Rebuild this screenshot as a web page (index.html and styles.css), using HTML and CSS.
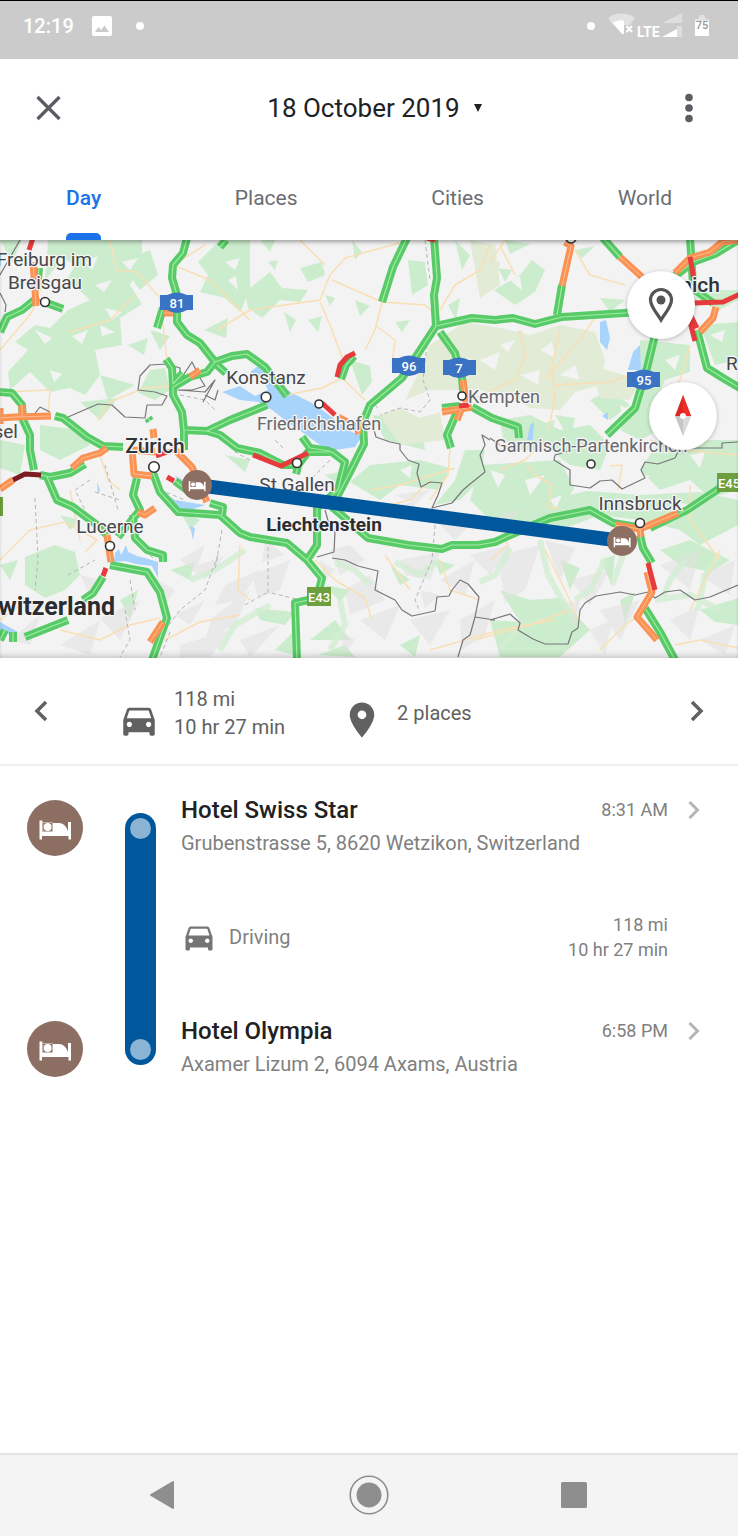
FILE: index.html
```html
<!DOCTYPE html>
<html lang="en">
<head>
<meta charset="utf-8">
<meta name="viewport" content="width=device-width, initial-scale=1">
<title>Timeline</title>
<link rel="stylesheet" href="styles.css">
</head>
<body>
<svg class="sprite" aria-hidden="true">
  <symbol id="car" viewBox="0 0 24 24"><path d="M18.92 6.01C18.72 5.42 18.16 5 17.5 5h-11c-.66 0-1.21.42-1.42 1.01L3 12v8c0 .55.45 1 1 1h1c.55 0 1-.45 1-1v-1h12v1c0 .55.45 1 1 1h1c.55 0 1-.45 1-1v-8l-2.08-5.99zM6.5 16c-.83 0-1.5-.67-1.5-1.5S5.67 13 6.5 13s1.5.67 1.5 1.5S7.33 16 6.5 16zm11 0c-.83 0-1.5-.67-1.5-1.5s.67-1.5 1.5-1.5 1.5.67 1.5 1.5-.67 1.5-1.5 1.5zM5 11l1.5-4.5h11L19 11H5z"/></symbol>
  <symbol id="bed" viewBox="0 0 56 56"><circle cx="28" cy="28" r="28" fill="#8d6e63"/><path fill="#fff" d="M12.500 20.500H15.500V31.500H25.500V23H32C36 23 39.500 26 41 31.500V22H44V39.500H41.500V36H15V39.500H12.500z"/><path d="M16 31.500V22.500H25.500" fill="none" stroke="#c4b1aa" stroke-width="1"/><circle cx="20.700" cy="27" r="3.900" fill="#fff"/></symbol>
</svg>

<div class="screen">
  <header class="status">
    <div class="status-side">
      <span>12:19</span>
      <svg class="status-photo" viewBox="0 0 20 20"><path fill="#fff" fill-rule="evenodd" d="M2 0h16a2 2 0 0 1 2 2v16a2 2 0 0 1-2 2H2a2 2 0 0 1-2-2V2a2 2 0 0 1 2-2zm1 16h14l-4.500-6.500-3.500 4.500-2.500-3z"/></svg>
      <i class="status-dot"></i>
    </div>
    <div class="status-side status-right">
      <i class="status-dot"></i>
      <svg class="status-net" viewBox="0 0 74 26">
        <path fill="#e2e2e2" d="M0 5C7-1 20-1 27 5l-5 7H5z"/><path fill="#fff" d="M4.500 10c5-3 9-3.500 11.500-2v13h-2z"/>
        <path d="m18.500 13 5.500 6m0-6-5.500 6" stroke="#fff" stroke-width="2"/>
        <text x="29" y="24" class="lte">LTE</text>
        <path fill="#dedede" d="M54 10 74 0v10zM69 13h5v11h-5z"/><path fill="#fff" d="M54 24l15-8v8z"/>
      </svg>
      <svg class="status-batt" viewBox="0 0 14 22"><path fill="#e2e2e2" d="M0 4h3l2-4h4l2 4h3v4H0z"/><path fill="#fff" d="M0 6h14v14a1 1 0 0 1-1 1H1a1 1 0 0 1-1-1z"/><text x="7" y="14" class="batt">75</text></svg>
    </div>
  </header>

  <div class="appbar">
    <button class="icon-btn" aria-label="Close"><svg width="48" height="48" viewBox="0 0 48 48"><path d="m12.500 13 22 22m0-22-22 22" stroke="#5a5d61" stroke-width="3.300"/></svg></button>
    <button class="date">18 October 2019 <svg width="8" height="8" viewBox="0 0 8 8"><path d="M0 0h8L4 8z" fill="#202124"/></svg></button>
    <button class="icon-btn" aria-label="More options"><svg width="48" height="48" viewBox="0 0 48 48" fill="#5a5d61"><circle cx="24" cy="13.500" r="3.800"/><circle cx="24" cy="24" r="3.800"/><circle cx="24" cy="34.500" r="3.800"/></svg></button>
  </div>

  <nav class="tabs">
    <a href="#day" class="tab tab-active" aria-current="page">Day</a>
    <a href="#places" class="tab">Places</a>
    <a href="#cities" class="tab">Cities</a>
    <a href="#world" class="tab">World</a>
  </nav>

  <div class="map">
    <svg class="map-art" viewBox="0 240 738 418" role="img" aria-label="Route map from Wetzikon to Innsbruck">
      <defs>
        <g id="roads-green">
          <path d="M187 238 183 253 173 265 172 278 177 295 177 322 187 335 200 343 215 362 207 372 190 377 173 387 173 395 182 412 184 430 207 431 230 420 250 412 267 405"/>
          <path d="M215 362 232 356 247 354 265 367 287 396M217 365 226 373M166 359 172 368 173 384 183 373M163 308 157 328M47 303 63 309M0 332 7 317 22 310 38 297M39 268 37 290M226 240 220 247"/>
          <path d="M0 392 12 393 22 405 23 420 30 435 30 450 34 470M55 416 63 418 87 437 103 446 123 447M184 430V450M207 431 220 435 237 448 260 453 283 465 298 465 308 452 332 452 345 462 338 490 317 508 317 545 307 560"/>
          <path d="M434 238 437 278 434 295 436 326 402 378 370 405 363 422 364 444 350 472 338 495 333 508 345 518 368 538 408 545 442 549 452 545 478 545 495 542 517 532 550 518 590 510 613 523 637 527M650 528 687 510 720 488 738 480"/>
          <path d="M407 238 393 267 382 302M436 326 472 318 495 320 513 318 535 324 562 317 640 312M440 332 455 353 462 378 464 400M557 315 562 285M603 238 620 257M690 238 693 285M675 276 693 262 715 254 738 240"/>
          <path d="M697 330 707 368 723 378 740 388M655 335 647 368 635 408 607 435M472 407 492 418 518 427 519 438M457 412 447 435 451 448M354 356 346 365 341 379M442 408 460 406M302 437 310 448 330 451M695 290 713 303"/>
          <path d="M40 475 50 477 70 473 85 464M47 477 57 500 73 507 97 525 107 535M110 565 147 572 160 592 167 618 152 660M103 577 93 593 83 600M25 637 68 620M0 640 5 630M13 632V642"/>
          <path d="M137 478 133 495 140 510 118 537M133 515 135 538 147 550 163 555 163 562M153 473 160 492 178 512 220 515 240 533 250 537 287 543 307 560 322 578 317 598 295 603 297 660M210 503 223 507 222 515M175 481 187 490M640 535 643 548 652 563M645 608 660 632 675 660M148 418 150 421M298 466 296 474"/>
        </g>
        <g id="roads-orange">
          <path d="M0 418 15 417 51 416M22 405V416M33 262 35 290 36 306M0 408V424M190 377 200 370M164 313 173 313M153 429 154 438M72 468 83 458 100 453 107 448M132 448 134 474 152 476M132 450 155 452M0 489 13 480M172 447 192 467 207 502M107 535 111 562M138 512 145 515 155 508M163 622 150 642"/>
          <path d="M565 242 571 246 562 286M620 257 642 277M675 273 690 258 710 252 722 242 738 240M716 307 713 318 700 332M463 380 466 402M442 412 472 407M461 410 457 420M338 417 357 427 359 434M615 525 640 529 678 513M640 529 641 537M647 572 652 592 637 617 657 640"/>
        </g>
        <g id="roads-red">
          <path d="M33 238 29 250M337 377 340 365 347 357 355 353M322 403 335 415M253 455 281 466 308 453M690 257 694 280M693 303 723 302 740 294M689 318 695 341M688 310 697 328M648 563 655 590M106 568 103 576M167 477 174 481M459 406 469 405M156 456 173 450M427 238 435 240"/>
        </g>
      </defs>

      <rect y="240" width="738" height="418" fill="#f3f3f3"/>
      <g class="forest">
        <path d="M48 240H142V262L130 285 142 304 120 318 122 345 95 350 100 375 85 395 70 388 50 392 30 372 10 390 8 372 28 350 15 342 35 325 50 328 68 310 90 300 70 282 60 262 45 280Z"/>
        <path d="M120 262 150 250 158 275 140 290ZM0 240H22L12 262ZM198 262 220 240H250V290L240 312 225 298 200 292 208 275ZM204 330 228 318 226 338ZM128 345 148 338 144 355ZM138 393 150 370 165 368 170 390 155 400ZM100 375 135 385 108 400ZM80 402 118 398 100 420ZM150 330 170 336 160 350ZM40 425 80 430 90 445 60 460 40 450ZM0 440 25 445 20 475 0 468Z"/>
        <path d="M245 292 270 272 282 288 308 290 300 302 280 300 262 318 248 308ZM260 240H275L270 252ZM300 268 322 262 325 275 308 282ZM284 312 296 320 290 332ZM308 320 322 316 318 332ZM352 240 362 252 355 260ZM350 360 370 366 372 382 362 395ZM355 300 370 306 360 316ZM408 260 425 262 428 285 412 295ZM455 240 470 255 462 270ZM480 262 492 275 482 285ZM448 305 460 298 456 320ZM268 262 278 260 275 270ZM395 322 410 320 402 332ZM325 295 335 298 330 306Z"/>
        <path d="M494 290 520 275 532 260 545 270 535 292 515 305ZM498 268 512 270 505 282ZM505 240 530 244 510 254ZM575 250 595 246 582 258ZM600 298 625 300 610 312ZM640 340 690 345 690 372 665 380 655 405 660 430 640 440 620 430 640 400ZM700 325 738 322V360L715 365ZM560 335 580 330 575 350ZM590 350 605 360 595 372ZM590 400 610 390 630 405 610 420ZM500 420 530 415 560 430 590 425 610 445 600 470 570 465 550 450 505 450ZM660 440H738V490L710 498 690 480 660 490 640 470ZM555 415 575 418 570 440ZM700 290H738V300L715 312ZM540 425 555 420 550 440Z"/>
        <path d="M480 465 560 460 575 490 640 495 700 492 738 500V525L700 545 680 530 640 520 600 515 560 530 500 530 470 500ZM370 465 420 460 450 468 440 490 400 485 380 500 350 482ZM372 415 420 420 425 450 385 440ZM465 450 485 450 480 480 460 500 435 505 455 480ZM500 590 530 600 560 598 590 630 560 657H500L490 620 520 622ZM560 560 580 568 570 590ZM600 560 615 555 612 585ZM318 655 345 645 355 657ZM310 640 335 620 350 640ZM390 565 410 580 400 585ZM325 585 350 590 340 602ZM400 645 420 635 415 657Z"/>
        <path d="M25 557 55 545 75 552 80 575 65 590 45 598 25 585ZM180 510 200 520 190 530ZM120 600 138 590 130 620ZM0 565 18 560 10 580ZM60 515 80 520 70 530ZM170 570 195 562 190 580ZM255 608 295 612 285 625 260 620ZM275 650 295 630V655ZM660 550 690 540 730 560 710 572 680 565ZM620 600 635 592 625 625ZM700 610 738 598V625L715 622ZM435 560 455 565 440 575ZM225 455 250 460 245 472ZM325 475 340 472 345 490Z"/>
      </g>
      <g class="olive">
        <path d="M430 345 465 322 500 328 530 335 560 325 595 332 605 360 600 385 575 392 560 410 530 408 510 395 480 390 430 390 405 400 420 370ZM470 240 495 245 500 285 480 298ZM490 345 520 330 540 345 515 360ZM380 415 400 408 420 418 440 412 445 440 400 445ZM590 365 640 380 630 400 600 398ZM690 295 705 300 695 310ZM488 260 500 262 495 285Z"/>
      </g>
      <g class="clearing">
        <path d="M60 256 75 265 68 278 58 272ZM95 285 112 280 104 292ZM35 330 52 338 45 344ZM105 308 122 312 112 320ZM122 262 138 258 130 270ZM50 370 62 374 54 382ZM100 325 115 332 102 336ZM225 262 240 258 235 270ZM228 280 236 276 238 290ZM85 262 98 256 92 270ZM72 336 88 330 82 344ZM510 280 520 276 522 290ZM500 345 515 340 508 352ZM540 350 552 342 555 358ZM480 360 500 352 495 370ZM520 375 540 370 538 385ZM560 375 575 365 580 380ZM450 362 470 358 478 375ZM620 405 630 410 622 418ZM665 360 680 355 675 370ZM710 335 725 330 722 342ZM525 480 545 475 530 495ZM580 480 598 488 570 495ZM690 455 705 452 700 468ZM490 470 505 475 498 488ZM400 470 412 465 410 478ZM630 480 650 475 640 488ZM670 500 690 505 678 518ZM550 500 562 495 556 508Z"/>
      </g>
      <g class="ridge">
        <path d="M180 560 205 545 198 565 225 556 205 580ZM225 585 260 570 240 600 215 605ZM175 615 205 600 190 625ZM212 618 250 590 235 625 205 640ZM252 575 290 560 280 590 258 598ZM10 640 40 615 30 645ZM60 645 100 620 90 655ZM100 618 140 600 120 640ZM180 645 230 630 210 657H180ZM240 640 280 625 250 657ZM265 540 285 555 262 562ZM330 550 350 545 365 560 340 575ZM345 590 370 575 385 600 350 615ZM400 560 440 552 430 580 405 575ZM360 620 400 605 385 640ZM410 620 450 610 430 645ZM440 580 475 560 465 595ZM470 555 510 545 490 575ZM500 555 540 545 525 590 508 600ZM545 540 575 548 560 580ZM460 620 495 600 485 635 462 650ZM500 570 520 560 505 605ZM570 580 610 570 590 605ZM600 610 640 600 620 640ZM590 630 612 620 605 655ZM670 620 700 605 690 640ZM700 640 735 625 725 655ZM660 565 700 550 690 590ZM700 575 735 560 730 595ZM340 630 355 640 345 655ZM380 510 420 500 400 520ZM440 525 475 520 455 540ZM490 520 520 508 510 525ZM395 495 430 490 415 503ZM150 575 175 590 165 605ZM80 575 100 580 90 595ZM20 600 50 605 30 615ZM560 605 580 600 575 625ZM420 590 440 595 425 608ZM320 560 335 570 325 580Z"/>
      </g>
      <g class="valley">
        <path d="M540 540 548 575 562 600 572 615M605 560 590 590 575 600M625 550 612 585M510 548 495 575 480 582M440 560 420 575 395 562M720 555 705 575 698 610M655 600 690 595 720 610M500 650 520 625 545 620M330 650 345 625 340 600M370 585 355 570 335 562M220 650 235 625 270 605M190 580 215 570 245 550M685 560 670 580 662 600"/>
      </g>
      <g class="water">
        <path d="M222 392 240 386 255 396 268 390 262 378 250 372 258 366 272 378 292 393 310 402 325 412 338 422 352 432 362 436 355 447 335 450 320 445 305 434 290 424 272 410 258 402 240 400ZM600 322 606 320 610 338 607 350 600 342ZM640 345 641 370 628 370 633 352ZM115 553 119 549 121 555 126 545 128 552 137 556 145 558 158 562 158 578 152 566 136 564 125 561 114 562ZM160 490 175 500 205 505 185 512 168 505ZM174 475 192 485 188 490ZM0 622 18 632 12 636 0 630ZM530 425 534 422 533 440 527 440ZM190 526 195 528 193 540ZM97 482 100 490 98 494ZM602 416 608 412V420Z"/>
      </g>
      <g class="minor">
        <path d="M110 240 116 270 137 272 160 298 167 360M0 350 30 315 38 300M0 392 50 390 48 416M98 420 110 402 145 388 170 386M70 332 110 320 135 295M173 265 210 280 250 320M178 262 205 245M217 330 250 310 285 305 320 300 330 275 345 258 385 247 410 240M320 302 330 325 343 360M332 280 382 302 425 305 440 318M382 302 375 330 365 350M300 240 325 265M287 395 322 388 342 378 365 400M375 325 395 340 392 365M440 310 455 285 480 270 490 245M500 245 515 275M490 262 505 240M520 330 525 358 515 380 470 400M560 330 552 365 555 400 548 430M600 310 580 340 545 380M555 385 610 382 640 372M575 250 590 275 625 285M690 345 680 380 660 400M650 440 680 450 738 455"/>
        <path d="M0 560 30 530 65 522 97 540 85 552M70 490 80 540M100 455 108 480 120 490M0 620 20 605M60 630 100 640 130 625 160 618M165 640 200 622 240 615M240 545 238 590 250 600M315 560 335 580 365 598 372 620M385 555 410 590M440 560 450 590 480 600M370 490 400 485 455 468M450 448 448 475 430 500M370 510 410 500 430 480M527 465 535 475 552 485 548 508 560 508M610 466 622 465 618 490M490 560 508 545 500 530M545 550 570 600 580 625M475 640 530 625 570 610M690 485 690 520 720 560M720 550 705 580 690 610M600 650 625 625 640 615M675 645 700 640 738 648M430 650 500 630 555 620M500 470 525 460 540 445"/>
      </g>
      <g class="county">
        <path d="M425 240 430 280M427 345 423 380 430 400 420 412 400 408 380 415M180 395 205 400 215 410M90 480 75 490 90 520M95 492 120 500M35 498 38 560 35 590M68 575 95 560M105 465 118 510M125 610 130 640 120 657M130 580 135 610M160 490 185 500M218 555 205 590 180 610 165 630M222 530 215 570M268 540V592L300 600M245 605 268 592M435 525 432 560 415 600 420 612M283 448 275 440M250 460 235 452M330 460 310 480M370 400 380 410M170 632 160 657M140 545 155 560"/>
      </g>
      <g class="border">
        <path d="M32 417 40 407 50 412M68 417 98 404 112 405 125 417 145 418 147 405 162 405 167 396 155 392 138 390 140 376 150 365 167 364 180 368 180 380 192 362 200 378 205 386 192 390 178 390 205 392 215 380 203 402M0 293 6 305 5 312M20 240 0 275M205 395 215 400 218 390"/>
        <path d="M374 430 376 437 390 442 400 444 400 450 408 460 419 464 417 473 421 487 430 482 442 483 438 495 432 508 452 503 463 490 470 484 485 472 480 455 485 445 482 435 490 440M325 510 329 524 335 532 334 552 317 557M332 558 345 560 358 566 378 571 375 590 395 600 402 610 412 616 435 611 437 597 449 596 452 590 460 580 468 584 479 597 475 617 470 635 463 640 458 657M475 617 495 620M490 620 510 614 520 623 518 630 533 639 545 644 568 644 572 632 578 628 580 610 585 603 596 596 620 592 635 595 648 592 655 598 665 592 680 590 695 600 710 597 738 585M490 438 500 445 520 450M572 450 555 455 554 460 570 470 570 485 590 488 600 481 612 480 622 489 645 478 641 470 645 462 658 464 675 458 680 448 690 448 722 448 722 443 738 442"/>
      </g>
      <g class="roads">
        <use href="#roads-green" class="green"/><use href="#roads-green" class="mid-green"/>
        <use href="#roads-orange" class="orange"/><use href="#roads-orange" class="mid-orange"/>
        <use href="#roads-red" class="red"/>
        <path d="M13 480 25 474 41 475" class="maroon"/>
      </g>

      <g class="towns">
        <circle cx="45" cy="302" r="4.500"/><circle cx="266" cy="397" r="4.800"/><circle cx="319" cy="404" r="4"/><circle cx="462" cy="396" r="4"/><circle cx="154" cy="467" r="5.300"/><circle cx="297" cy="463" r="4.500"/><circle cx="110" cy="546" r="4.500"/><circle cx="591" cy="464" r="4"/><circle cx="640" cy="523" r="4.500"/><circle cx="571" cy="238" r="5"/>
      </g>
      <g class="shield">
        <path d="M160 295H167Q177 290 187 295H193V310H187Q177 316 167 310H160ZM392 358H399Q409 353 419 358H425V373H419Q409 379 399 373H392ZM443 360H449Q459 355 469 360H476V375H469Q459 381 449 375H443ZM627 372H634Q644 367 654 372H660V387H654Q644 393 634 387H627Z"/>
        <path class="shield-e" d="M307 587H331V606H307ZM717 473H738V492H717ZM-5 497H3V516H-5Z"/>
        <text x="177" y="308">81</text><text x="409" y="371">96</text><text x="459" y="373">7</text><text x="644" y="385">95</text><text x="319" y="602">E43</text><text x="729" y="488">E45</text>
      </g>
      <g class="labels">
        <text x="92" y="266" text-anchor="end">Freiburg im</text><text x="45" y="289" text-anchor="middle">Breisgau</text>
        <text x="266" y="384" text-anchor="middle">Konstanz</text><text x="319" y="430" text-anchor="middle" class="soft">Friedrichshafen</text>
        <text x="504" y="403" text-anchor="middle" class="soft">Kempten</text><text x="591" y="452" text-anchor="middle" class="soft">Garmisch-Partenkirchen</text>
        <text x="297" y="491" text-anchor="middle">St Gallen</text><text x="110" y="533" text-anchor="middle">Lucerne</text><text x="640" y="510" text-anchor="middle">Innsbruck</text>
        <text x="18" y="438" text-anchor="end">Basel</text><text x="726" y="370">R</text>
        <text x="155" y="453" text-anchor="middle" class="city">Zürich</text><text x="720" y="292" text-anchor="end" class="city">Munich</text>
        <text x="324" y="531" text-anchor="middle" class="country">Liechtenstein</text><text x="115" y="615" text-anchor="end" class="nation">Switzerland</text>
      </g>

      <path d="M197 485 622 541" class="trip"/>
      <use href="#bed" x="182" y="470" width="30" height="30"/><use href="#bed" x="607" y="526" width="30" height="30"/>
    </svg>
    <button class="map-btn map-place" aria-label="Show place"><svg width="68" height="68" viewBox="0 0 68 68"><path d="M34 18.500c-6 0-10.500 4.800-10.500 10.500 0 7 6.500 13 10.500 20 4-7 10.500-13 10.500-20 0-5.700-4.500-10.500-10.500-10.500z" fill="none" stroke="#555" stroke-width="3.200"/><circle cx="34" cy="29" r="4.500" fill="#555"/></svg></button>
    <button class="map-btn map-compass" aria-label="Compass"><svg width="68" height="68" viewBox="0 0 68 68"><path d="M34 13 26 34h16z" fill="#dd2822"/><path d="M34 13v21h8z" fill="#f02d29"/><path d="M26 34h16l-8 20z" fill="#c6c6c6"/><path d="M34 34h8l-8 20z" fill="#dadada"/><circle cx="34" cy="34" r="3" fill="#fff"/></svg></button>
  </div>

  <section class="summary">
    <button class="icon-btn" aria-label="Previous day"><svg width="48" height="48" viewBox="0 0 48 48"><path d="m28 15-9 9 9 9" fill="none" stroke="#616161" stroke-width="3.500"/></svg></button>
    <div class="facts">
      <div class="fact"><svg class="icon-lg"><use href="#car"/></svg><p>118 mi<br>10 hr 27 min</p></div>
      <div class="fact fact-top"><svg class="icon-lg" viewBox="0 0 24 24"><path d="M12 2C8.130 2 5 5.130 5 9c0 5.250 7 13 7 13s7-7.750 7-13c0-3.870-3.130-7-7-7zm0 9.500a2.500 2.500 0 1 1 0-5 2.500 2.500 0 0 1 0 5z"/></svg><p>2 places</p></div>
    </div>
    <button class="icon-btn" aria-label="Next day"><svg width="48" height="48" viewBox="0 0 48 48"><path d="m20 15 9 9-9 9" fill="none" stroke="#616161" stroke-width="3.500"/></svg></button>
  </section>

  <main class="timeline">
    <svg class="stop-icon"><use href="#bed"/></svg>
    <div class="rail"><i></i><i></i></div>
    <a class="stop" href="#swiss-star">
      <span class="stop-head"><strong>Hotel Swiss Star</strong><span class="time">8:31 AM</span><svg class="chev" viewBox="0 0 12 20"><path d="m1.500 2 8 8-8 8"/></svg></span>
      <span class="address">Grubenstrasse 5, 8620 Wetzikon, Switzerland</span>
    </a>
    <div class="leg"><svg class="icon-md"><use href="#car"/></svg><span class="mode">Driving</span><p class="leg-info">118 mi<br>10 hr 27 min</p></div>
    <svg class="stop-icon stop-icon-end"><use href="#bed"/></svg>
    <a class="stop" href="#olympia">
      <span class="stop-head"><strong>Hotel Olympia</strong><span class="time">6:58 PM</span><svg class="chev" viewBox="0 0 12 20"><path d="m1.500 2 8 8-8 8"/></svg></span>
      <span class="address">Axamer Lizum 2, 6094 Axams, Austria</span>
    </a>
  </main>

  <footer class="sysnav">
    <button aria-label="Back"><svg width="40" height="40" viewBox="0 0 40 40"><path d="M7 20 29 7v26z" fill="#8e8e8e" stroke="#8e8e8e" stroke-width="2" stroke-linejoin="round"/></svg></button>
    <button aria-label="Home"><svg width="40" height="40" viewBox="0 0 40 40"><circle cx="20" cy="20" r="18.800" fill="none" stroke="#8e8e8e" stroke-width="1.600"/><circle cx="20" cy="20" r="12.500" fill="#8e8e8e"/></svg></button>
    <button aria-label="Recent apps"><svg width="40" height="40" viewBox="0 0 40 40"><rect x="7" y="7" width="26" height="26" rx="1.500" fill="#8e8e8e"/></svg></button>
  </footer>
</div>
</body>
</html>
```
FILE: styles.css
```css
* { box-sizing: border-box; }
body { margin: 0; background: #fff; font-family: Roboto, "Liberation Sans", sans-serif; color: #616161; }
p { margin: 0; }
a { color: inherit; text-decoration: none; }
button { border: 0; padding: 0; background: none; font: inherit; color: inherit; }
svg { display: block; }
.sprite { position: absolute; width: 0; height: 0; }
.screen { min-height: 100vh; display: flex; flex-direction: column; }

.status { height: 59px; padding: 0 29px 8px 23px; background: #cbcbcb; border-top: 1px solid #000; color: #fff; font-size: 20px; font-weight: 500; display: flex; justify-content: space-between; align-items: center; }
.status-side { display: flex; align-items: center; gap: 18px; }
.status-photo { width: 20px; height: 20px; }
.status-dot { width: 8px; height: 8px; border-radius: 50%; background: #fff; margin-left: 6px; }
.status-right { gap: 13px; }
.status-net { width: 74px; height: 26px; }
.status-batt { width: 14px; height: 22px; }
.lte { font-size: 14px; font-weight: 700; fill: #fff; }
.batt { font-size: 11px; text-anchor: middle; fill: #999; }

.appbar { height: 98px; padding: 0 25px; display: flex; align-items: center; justify-content: space-between; }
.icon-btn { flex: none; width: 48px; height: 48px; }
.date { display: flex; align-items: center; gap: 14px; padding-left: 11px; font-size: 26px; color: #202124; }

.tabs { height: 83px; padding: 0 66px; display: flex; justify-content: space-between; font-size: 21px; color: #6a6d72; }
.tab { height: 83px; line-height: 82px; }
.tab-active { color: #1a73e8; font-weight: 500; position: relative; }
.tab-active::after { content: ""; position: absolute; left: 0; right: 0; bottom: 0; height: 7px; background: #1a73e8; border-radius: 5px 5px 0 0; }

.map { position: relative; overflow: hidden; }
.map::after { content: ""; position: absolute; inset: 0; pointer-events: none; box-shadow: inset 0 4px 4px -2px rgba(0, 0, 0, .35), inset 0 -6px 6px -4px rgba(0, 0, 0, .2); }
.map-art { width: 100%; height: auto; }
.map-btn { position: absolute; width: 68px; height: 68px; border-radius: 50%; background: #fff; box-shadow: 0 1px 4px rgba(0, 0, 0, .25); }
.map-place { top: 31px; right: 43px; }
.map-compass { top: 142px; right: 21px; }
.forest { fill: #ccedcd; }
.olive { fill: #e2ebd5; }
.clearing { fill: #f3f3f3; }
.ridge { fill: #e0e0e0; opacity: .55; }
.water { fill: #a8d3fb; }
.minor, .county, .border, .roads, .valley { fill: none; stroke-linejoin: round; }
.valley { stroke: #d3eed2; stroke-width: 6px; opacity: .8; }
.minor { stroke: #f9dfb4; stroke-width: 1.5px; }
.county { stroke: #b5b5b8; stroke-width: 1px; stroke-dasharray: 4 3; }
.border { stroke: #77777a; stroke-width: 1.2px; }
.green { stroke: #58cb68; stroke-width: 8px; }
.mid-green { stroke: #9ceda0; stroke-width: 1.2px; }
.orange { stroke: #fa9254; stroke-width: 7px; }
.mid-orange { stroke: #fdbb91; stroke-width: 1px; }
.red { stroke: #e63a3c; stroke-width: 5px; }
.maroon { stroke: #7b1c22; stroke-width: 5px; }
.towns { fill: #fff; stroke: #333; stroke-width: 1.6px; }
.shield { fill: #3a73c4; }
.shield-e { fill: #6d9f3e; }
.shield text { fill: #fff; font-size: 13px; font-weight: 500; text-anchor: middle; }
.labels { font-size: 19px; fill: #45474b; stroke: #f6f6f6; stroke-width: 2.5px; stroke-linejoin: round; paint-order: stroke; }
.labels .soft { font-size: 18px; fill: #66686d; }
.labels .city { font-size: 21px; font-weight: 500; fill: #303236; }
.labels .country { font-size: 19px; font-weight: 700; fill: #2a2c30; }
.labels .nation { font-size: 25px; font-weight: 700; fill: #2a2c30; }
.trip { stroke: #01579b; stroke-width: 14px; }

.summary { padding: 27px 18px 23px; min-height: 108px; border-bottom: 2px solid #efefef; display: flex; align-items: center; font-size: 20px; line-height: 28px; }
.summary .icon-btn { margin-bottom: 4px; }
.facts { flex: 1; padding-left: 52px; display: flex; align-items: flex-end; gap: 56px; }
.fact { display: flex; align-items: flex-end; gap: 14px; }
.fact-top { align-items: flex-start; }
.icon-lg { width: 42px; height: 42px; fill: #616161; }

.timeline { flex: 1; padding: 30px 38px 30px 27px; display: grid; grid-template-columns: 98px 31px 1fr; align-content: start; row-gap: 54px; }
.stop-icon { width: 56px; height: 56px; margin-top: 4px; grid-column: 1; grid-row: 1; }
.stop-icon-end { grid-row: 3; }
.rail { grid-column: 2; grid-row: 1 / 4; margin: 17px 0 13px; padding: 5px; border-radius: 16px; background: #01579b; display: flex; flex-direction: column; justify-content: space-between; }
.rail i { width: 21px; height: 21px; border-radius: 50%; background: #8ab3d4; }
.stop, .leg { grid-column: 3; padding-left: 25px; }
.stop { display: flex; flex-direction: column; gap: 5px; line-height: 28px; }
.stop-head { display: flex; align-items: center; }
.stop-head strong { flex: 1; font-size: 24px; font-weight: 500; color: #212121; }
.time, .leg-info { font-size: 18px; color: #808080; }
.chev { width: 12px; height: 20px; margin-left: 20px; fill: none; stroke: #b5b5b5; stroke-width: 3px; }
.address, .mode { font-size: 20px; color: #808080; }
.leg { height: 52px; display: flex; align-items: center; }
.icon-md { width: 36px; height: 36px; fill: #757575; }
.mode { flex: 1; padding-left: 12px; }
.leg-info { text-align: right; line-height: 25px; padding-right: 32px; }

.sysnav { height: 83px; padding: 0 144px 2px; background: #f4f4f4; border-top: 2px solid #e4e4e4; display: flex; align-items: center; justify-content: space-between; }
```
